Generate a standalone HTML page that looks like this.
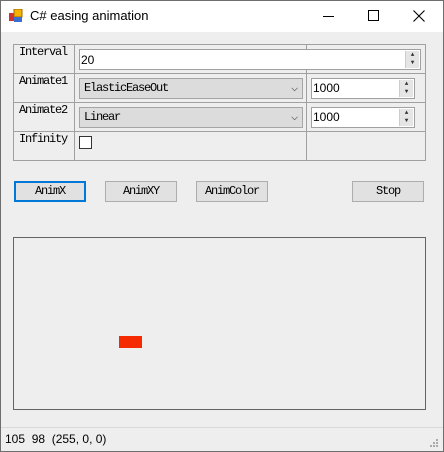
<!DOCTYPE html><html><head><style>
*{margin:0;padding:0;box-sizing:border-box}
body{width:444px;height:452px;background:#eeeeee;position:relative;overflow:hidden;font-family:"Liberation Mono","Noto Sans CJK SC",monospace;font-size:12px;letter-spacing:-1.2px;color:#000}
.frame{position:absolute;left:0;top:0;width:444px;height:452px;border:1px solid #6e6e6e;z-index:5}
.title{position:absolute;left:0;top:0;width:444px;height:32px;background:#fff}
.a{position:absolute}
.cell{position:absolute;border:1px solid #a0a0a0}
.tb{position:absolute;background:#fff;border:1px solid #a0a0a0;letter-spacing:0}
.spin{position:absolute;top:1px;right:1px;width:14px;bottom:1px;background:#e5e5e5;border-left:1px solid #ccc;font-size:6px;line-height:8px;text-align:center;color:#333}
.cb{position:absolute;background:#dcdcdc;border:1px solid #a5a5a5;padding-left:4px;line-height:19px}
.btn{position:absolute;top:181px;width:72px;height:21px;background:#e1e1e1;border:1px solid #adadad;text-align:center;line-height:19px}
.lbl{position:absolute}
</style></head><body>
<div class="title"></div>
<div class="frame"></div>
<svg class="a" style="left:9px;top:9px" width="14" height="14"><rect x="0" y="4" width="5" height="8" fill="#c33"/><rect x="5" y="0" width="8" height="8" fill="#f3b300" stroke="#a60" stroke-width="1"/><rect x="5" y="8" width="8" height="5" fill="#3a6fd0"/></svg>
<div class="a" style="left:30px;top:8px;font-family:'Liberation Sans',sans-serif;font-size:13px;letter-spacing:0">C# easing animation</div>
<div class="a" style="left:323px;top:16px;width:11px;height:1px;background:#000"></div>
<div class="a" style="left:368px;top:10px;width:11px;height:11px;border:1px solid #000"></div>
<svg class="a" style="left:413px;top:10px" width="12" height="12"><path d="M0.5 0.5L11.5 11.5M11.5 0.5L0.5 11.5" stroke="#000" stroke-width="1.1"/></svg>

<div class="cell" style="left:13px;top:44px;width:413px;height:117px"></div>
<div class="a" style="left:74px;top:44px;width:1px;height:117px;background:#a0a0a0"></div>
<div class="a" style="left:306px;top:44px;width:1px;height:117px;background:#a0a0a0"></div>
<div class="a" style="left:13px;top:73px;width:413px;height:1px;background:#a0a0a0"></div>
<div class="a" style="left:13px;top:102px;width:413px;height:1px;background:#a0a0a0"></div>
<div class="a" style="left:13px;top:131px;width:413px;height:1px;background:#a0a0a0"></div>

<div class="lbl" style="left:19px;top:45px">Interval</div>
<div class="lbl" style="left:19px;top:74px">Animate1</div>
<div class="lbl" style="left:19px;top:103px">Animate2</div>
<div class="lbl" style="left:19px;top:132px">Infinity</div>

<div class="tb" style="left:79px;top:49px;width:342px;height:21px"><span style="position:absolute;left:1px;top:3px;font-family:'Liberation Sans',sans-serif;font-size:12px">20</span><div class="spin">▲<br>▼</div></div>
<div class="cb" style="left:79px;top:78px;width:224px;height:21px">ElasticEaseOut<span style="position:absolute;right:5px;top:0;color:#555">⌵</span></div>
<div class="tb" style="left:311px;top:78px;width:104px;height:21px"><span style="position:absolute;left:1px;top:2px;font-family:'Liberation Sans',sans-serif;font-size:12px">1000</span><div class="spin">▲<br>▼</div></div>
<div class="cb" style="left:79px;top:107px;width:224px;height:21px">Linear<span style="position:absolute;right:5px;top:0;color:#555">⌵</span></div>
<div class="tb" style="left:311px;top:107px;width:104px;height:21px"><span style="position:absolute;left:1px;top:2px;font-family:'Liberation Sans',sans-serif;font-size:12px">1000</span><div class="spin">▲<br>▼</div></div>
<div class="a" style="left:79px;top:136px;width:13px;height:13px;background:#fff;border:1px solid #333"></div>

<div class="btn" style="left:14px;border:2px solid #0078d7;line-height:17px">AnimX</div>
<div class="btn" style="left:105px">AnimXY</div>
<div class="btn" style="left:196px">AnimColor</div>
<div class="btn" style="left:352px">Stop</div>

<div class="a" style="left:13px;top:237px;width:413px;height:173px;border:1px solid #646464"></div>
<div class="a" style="left:119px;top:336px;width:23px;height:12px;background:#f52a00"></div>

<div class="a" style="left:0;top:427px;width:444px;height:1px;background:#d8d8d8"></div>
<div class="a" style="left:5px;top:432px;font-family:'Liberation Sans',sans-serif;font-size:12px;letter-spacing:0">105&nbsp;&nbsp;98&nbsp;&nbsp;(255, 0, 0)</div>
<svg class="a" style="left:429px;top:438px" width="10" height="10" fill="#aaa"><rect x="7" y="1" width="2" height="2"/><rect x="4" y="4" width="2" height="2"/><rect x="7" y="4" width="2" height="2"/><rect x="1" y="7" width="2" height="2"/><rect x="4" y="7" width="2" height="2"/><rect x="7" y="7" width="2" height="2"/></svg>
</body></html>
